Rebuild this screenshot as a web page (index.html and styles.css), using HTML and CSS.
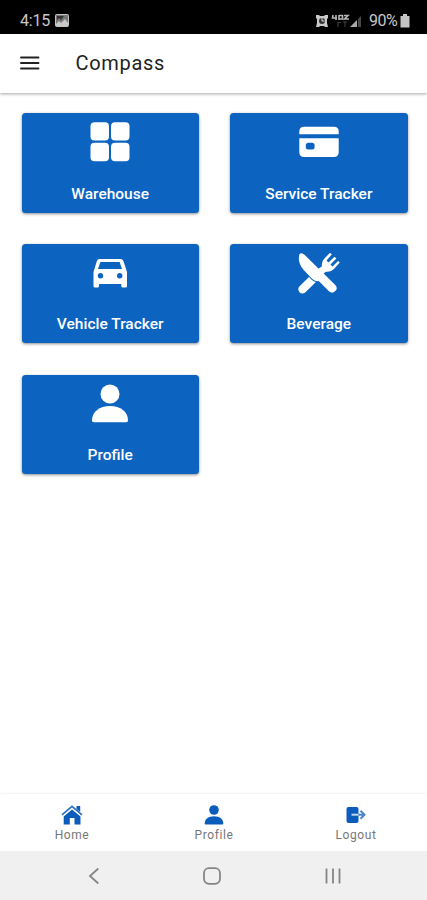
FILE: index.html
```html
<!DOCTYPE html>
<html lang="en">
<head>
<meta charset="utf-8">
<title>Compass</title>
<link rel="stylesheet" href="styles.css">
</head>
<body>
<div class="status">
  <span class="time">4:15</span>
  <svg class="photo" width="14" height="13" viewBox="0 0 14 13"><rect x=".5" y=".5" width="13" height="12" rx="1" fill="#777" stroke="#c4c4c4"/><path d="M1 12V10l3-3 2 2 4-4 3 4v3z" fill="#c8c8c8"/><path d="M2 2h7l-3 4-2-2-2 2z" fill="#333"/></svg>
  <svg class="signals" width="47" height="14" viewBox="0 0 47 14">
    <path d="M0 1h3l1 1h4l1-1h3v3l-1 1v4l1 4H9l-1-1H4l-1 1H0l1-4V5L0 4z" fill="#c9c9c9"/><circle cx="6" cy="7" r="3" fill="#333"/><path d="M6 4v3h2.500" stroke="#ddd" fill="none"/>
    <path d="M17 1l-.5 3H21M20 1v5M23 1v5M23 1.500h3.500v3.500H23M28 1.500h4l-3.500 3.500H33" stroke="#b5b5b5" stroke-width="1.600" fill="none"/>
    <path d="M22 8v5M22 8.500h3M27 8h4M29 8v5" stroke="#444" fill="none"/>
    <path d="M34 13l7-7v7z" fill="#aaa"/><path d="M42 5l3-3v11h-3z" fill="#484848"/>
  </svg>
  <span class="percent">90%</span>
  <svg class="battery" width="10" height="14" viewBox="0 0 10 14"><path d="M3 0h4v2h2.500v11.500h-9V2H3z" fill="#c4c4c4"/></svg>
</div>
<header class="header">
  <svg width="20" height="14" viewBox="0 0 20 14"><path d="M1 1.500h17.500M1 7h17.500M1 12.500h17.500" stroke="#222" stroke-width="1.900" stroke-linecap="round"/></svg>
  <h1>Compass</h1>
</header>
<main class="grid">
  <a class="card">
    <svg class="icon" viewBox="0 0 48 48"><rect x="4.500" y="4.300" width="18.500" height="18.300" rx="4"/><rect x="25" y="4.300" width="18.500" height="18.300" rx="4"/><rect x="4.500" y="24.800" width="18.500" height="18.500" rx="4"/><rect x="25" y="24.800" width="18.500" height="18.500" rx="4"/></svg>
    <span>Warehouse</span>
  </a>
  <a class="card">
    <svg class="icon" viewBox="0 0 48 48"><path d="M4.300 16.300V13.500q0-4.800 4.800-4.800h29.800q4.800 0 4.800 4.800v2.800zM4.300 20.300h39.400v13.900q0 4.800-4.800 4.800H9.100q-4.800 0-4.800-4.800z"/><rect class="hole" x="10.800" y="24.800" width="8.800" height="6.800" rx="2.500"/></svg>
    <span>Service Tracker</span>
  </a>
  <a class="card">
    <svg class="icon" viewBox="0 0 48 48"><path d="M13.500 10h21q2.200 0 3 2.200L41 23v14q0 1.500-1.500 1.500h-2.700q-1.500 0-1.500-1.500v-2H13v2q0 1.500-1.500 1.500H9q-1.500 0-1.500-1.500V23L10.800 12.200Q11.500 10 13.500 10z"/><path class="hole" d="M14.400 13h19.200l2.400 7H12z"/><circle class="hole" cx="14.500" cy="26.700" r="2.700"/><circle class="hole" cx="33.700" cy="26.700" r="2.700"/></svg>
    <span>Vehicle Tracker</span>
  </a>
  <a class="card">
    <svg class="icon" viewBox="0 0 48 48"><path d="M7.500 40.300L20 28" stroke="#fff" stroke-width="8.400" stroke-linecap="round"/><path class="knife" d="M4.500 5Q6.500 3 9.500 5.800L40.300 36q2.600 2.900.5 5.600-3 3.700-6.600 1L23.800 32q-3.600 1-6.500-1.900L8.700 21Q2 13.500 4.500 5z"/><path d="M23.500 19.800L27 17.200q-.8-4.700 2.400-7.700L35 3.800l1.800 1.700-5.300 6 2 1.900 6-5.700 1.900 1.800-5.900 6 2 1.900 5.600-5.500 1.700 1.700-5.900 6.500q-3 3.400-8 2.600L28 25z"/></svg>
    <span>Beverage</span>
  </a>
  <a class="card">
    <svg class="icon" viewBox="0 0 48 48"><circle cx="24" cy="14" r="9.500"/><path d="M6 40.500C6 31.500 13.500 26 24 26s18 5.500 18 14.500q0 1.800-1.800 1.800H7.800Q6 42.300 6 40.500z"/></svg>
    <span>Profile</span>
  </a>
</main>
<nav class="tabs">
  <a class="tab">
    <svg width="22" height="20" viewBox="0 0 22 20"><path d="M11 4.500l8.500 7V19.500h-6V13H8.800v6.500H2.700v-8zM15.500 1h3.700v6L15.500 4z"/><path d="M1 9.800L11 1.300 21 9.800" fill="none" stroke="#2e70c2" stroke-width="1.700"/></svg>
    <span>Home</span>
  </a>
  <a class="tab">
    <svg width="22" height="20" viewBox="0 0 22 20"><circle cx="11" cy="5" r="4.800"/><path d="M1.700 18.500c0-4.500 3.700-7.300 9.300-7.300s9.300 2.800 9.300 7.300q0 1-1 1H2.700q-1 0-1-1z"/></svg>
    <span>Profile</span>
  </a>
  <a class="tab">
    <svg width="22" height="20" viewBox="0 0 22 20"><path d="M3.500 2h8q2 0 2 2v12q0 2-2 2h-8q-2 0-2-2V4q0-2 2-2z"/><path d="M6.500 9.700h7" stroke="#c2d9f2" stroke-width="2"/><path d="M13.500 9.700h5.500M15.500 5.700l4 4-4 4" fill="none" stroke="#4a86cc" stroke-width="2"/></svg>
    <span>Logout</span>
  </a>
</nav>
<div class="system">
  <svg width="12" height="18" viewBox="0 0 12 18"><path d="M10.300 1.500L2 9l8.300 7.500"/></svg>
  <svg width="18" height="18" viewBox="0 0 18 18"><rect x="1" y="1.200" width="16" height="15.600" rx="5"/></svg>
  <svg width="18" height="18" viewBox="0 0 18 18"><path d="M2.500 1.500v15M9 1.500v15M15.500 1.500v15"/></svg>
</div>
</body>
</html>
```
FILE: styles.css
```css
* { box-sizing: border-box; }
body {
  margin: 0;
  height: 900px;
  display: flex;
  flex-direction: column;
  overflow: hidden;
  background: #fff;
  font-family: Roboto, "Liberation Sans", sans-serif;
}
svg { display: block; flex: none; }
.status {
  height: 34px;
  flex: none;
  display: flex;
  align-items: center;
  padding: 7px 17px 0 20px;
  background: #000;
  color: #c8c8c8;
  font-size: 16px;
}
.time { width: 35px; letter-spacing: -0.2px; }
.signals { margin-left: auto; }
.percent { margin-left: 6px; width: 31px; letter-spacing: -0.5px; }
.header {
  height: 59px;
  flex: none;
  display: flex;
  align-items: center;
  padding: 0 0 1px 20px;
  box-shadow: 0 1px 3px rgba(0, 0, 0, 0.35);
}
.header h1 {
  margin: 0 0 0 35.500px;
  font-size: 20px;
  font-weight: 400;
  letter-spacing: 0.7px;
  color: #222;
}
.grid {
  flex: 1;
  display: grid;
  grid-template-columns: 1fr 1fr;
  grid-auto-rows: 99.500px;
  gap: 31.300px;
  padding: 20px 19.500px 0 21.500px;
}
.card {
  display: flex;
  flex-direction: column;
  align-items: center;
  padding-top: 5px;
  border-radius: 3.500px;
  background: #0c64c0;
  box-shadow: 0 1px 3px rgba(0, 0, 0, 0.45);
  color: #fff;
  font-size: 15.500px;
  font-weight: 500;
  line-height: 20px;
}
.card span { margin-top: 17.500px; }
.icon { width: 48px; height: 48px; fill: #fff; }
.hole { fill: #0c64c0; }
.knife { stroke: #0c64c0; stroke-width: 1.800px; paint-order: stroke; }
.tabs {
  height: 57px;
  flex: none;
  display: grid;
  grid-template-columns: repeat(3, 1fr);
  padding-left: 1px;
  box-shadow: 0 -1px 2px rgba(0, 0, 0, 0.06);
}
.tab {
  display: flex;
  flex-direction: column;
  align-items: center;
  padding-top: 11px;
  font-size: 12px;
  line-height: 16px;
  letter-spacing: 0.6px;
  color: #777;
}
.tab svg { fill: #0c5cbc; }
.tab span { margin-top: 2px; }
.system {
  height: 49px;
  flex: none;
  display: flex;
  align-items: center;
  justify-content: center;
  gap: 103px;
  padding-left: 2px;
  background: #f0f0f0;
}
.system svg { fill: none; stroke: #858585; stroke-width: 1.800px; }
```
